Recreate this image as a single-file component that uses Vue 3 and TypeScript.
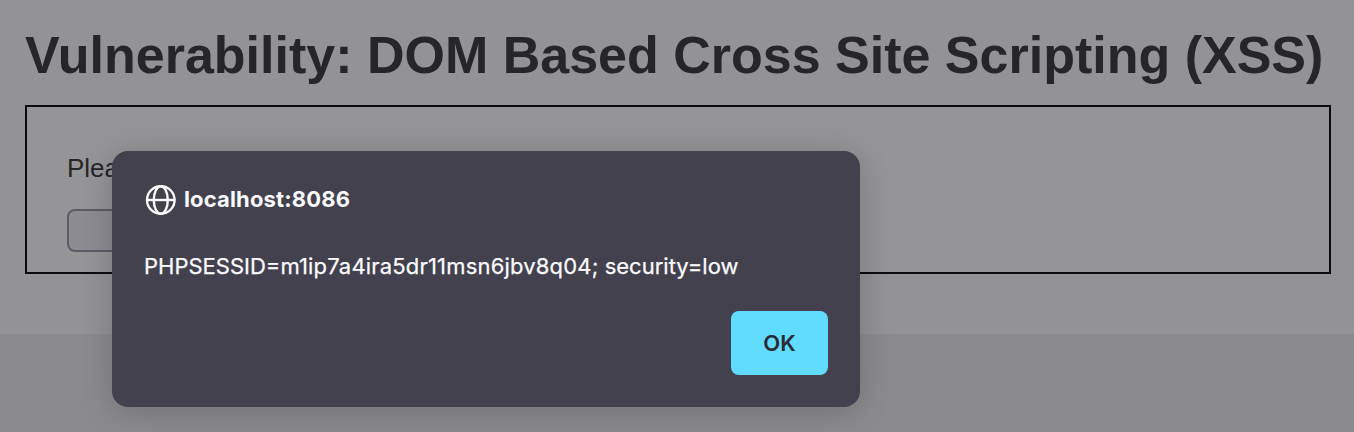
<script setup lang="ts">
const host: string = 'localhost:8086'
const session: string = 'm1ip7a4ira5dr11msn6jbv8q04;'
</script>

<template>
  <div class="page">
    <main class="content">
      <h1>Vulnerability: DOM Based Cross Site Scripting (XSS)</h1>
      <section class="panel">
        <p>Please</p>
        <div class="select"></div>
      </section>
    </main>
    <div class="dialog" role="alertdialog">
      <header>
        <svg width="32" height="32" viewBox="0 0 32 32" fill="none" stroke="#fbfbfe" stroke-width="2.4">
          <circle cx="15.8" cy="16" r="13.8" />
          <ellipse cx="15.8" cy="16" rx="7" ry="13.8" />
          <path d="M2 16H30" />
        </svg>
        <span class="host">{{ host }}</span>
      </header>
      <div class="message">PHPSESSID=<span class="session">{{ session }}</span> security=low</div>
      <footer><button type="button">OK</button></footer>
    </div>
  </div>
</template>

<style scoped>
.page { position: relative; height: 432px; overflow: hidden; background: #8b8b8d; font-family: "Liberation Sans", Arial, sans-serif; }
.content { box-sizing: border-box; height: 334px; padding: 25px 23px 0 25px; background: #939395; }
h1 { margin: 0; height: 80px; font-size: 52px; line-height: 60px; color: #262628; white-space: nowrap; }
.panel { box-sizing: border-box; height: 169px; border: 2px solid #0c0c0e; padding: 44px 40px; background: #959597; }
p { margin: 0; font-size: 26px; line-height: 34px; color: #262628; }
.select { box-sizing: border-box; width: 180px; height: 43px; margin-top: 24px; border: 2px solid #5c5b66; border-radius: 8px; background: #8d8c92; }
.dialog { position: absolute; box-sizing: border-box; left: 112px; top: 151px; width: 748px; height: 256px; padding: 32px; border-radius: 16px; background: #42414d; color: #fbfbfe; font-family: Inter, sans-serif; font-size: 22px; box-shadow: 0 4px 32px rgba(12, 12, 13, .2); }
header { display: flex; align-items: center; height: 34px; padding-left: 1px; gap: 7px; }
.host { padding-bottom: 2px; font-weight: 700; letter-spacing: .15px; }
.message { height: 34px; line-height: 34px; margin-top: 32px; white-space: nowrap; -webkit-text-stroke: .25px #fbfbfe; }
.session { letter-spacing: .18px; }
footer { display: flex; justify-content: flex-end; margin-top: 28px; }
button { width: 97px; height: 64px; padding: 0; border: 0; border-radius: 8px; background: #61dcff; color: #2b2a33; font: 600 22px Inter, sans-serif; }
</style>

<style>
body { margin: 0; }
</style>
